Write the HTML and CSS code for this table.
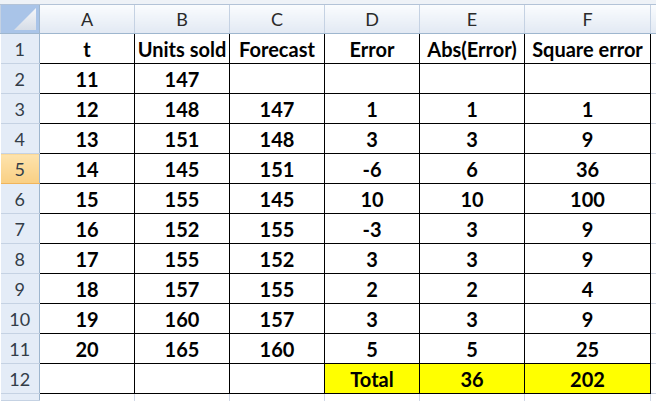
FILE: index.html
```html
<!DOCTYPE html>
<html>
<head>
<meta charset="utf-8">
<link rel="stylesheet" href="styles.css">
</head>
<body>
<div class="topbar"></div>
<table class="sheet">
  <colgroup>
    <col class="c-rh"><col class="c-a"><col class="c-b"><col class="c-c"><col class="c-d"><col class="c-e"><col class="c-f"><col class="c-g">
  </colgroup>
  <thead>
    <tr class="colhead">
      <th class="corner"><span class="tri"></span></th>
      <th>A</th><th>B</th><th>C</th><th>D</th><th>E</th><th>F</th><th class="edge"></th>
    </tr>
  </thead>
  <tbody>
    <tr><th class="rh">1</th><td class="d">t</td><td class="d">Units sold</td><td class="d">Forecast</td><td class="d">Error</td><td class="d">Abs(Error)</td><td class="d">Square error</td><td class="o"></td></tr>
    <tr><th class="rh">2</th><td class="d">11</td><td class="d">147</td><td class="d"></td><td class="d"></td><td class="d"></td><td class="d"></td><td class="o"></td></tr>
    <tr><th class="rh">3</th><td class="d">12</td><td class="d">148</td><td class="d">147</td><td class="d">1</td><td class="d">1</td><td class="d">1</td><td class="o"></td></tr>
    <tr><th class="rh">4</th><td class="d">13</td><td class="d">151</td><td class="d">148</td><td class="d">3</td><td class="d">3</td><td class="d">9</td><td class="o"></td></tr>
    <tr><th class="rh sel">5</th><td class="d">14</td><td class="d">145</td><td class="d">151</td><td class="d">-6</td><td class="d">6</td><td class="d">36</td><td class="o"></td></tr>
    <tr><th class="rh">6</th><td class="d">15</td><td class="d">155</td><td class="d">145</td><td class="d">10</td><td class="d">10</td><td class="d">100</td><td class="o"></td></tr>
    <tr><th class="rh">7</th><td class="d">16</td><td class="d">152</td><td class="d">155</td><td class="d">-3</td><td class="d">3</td><td class="d">9</td><td class="o"></td></tr>
    <tr><th class="rh">8</th><td class="d">17</td><td class="d">155</td><td class="d">152</td><td class="d">3</td><td class="d">3</td><td class="d">9</td><td class="o"></td></tr>
    <tr><th class="rh">9</th><td class="d">18</td><td class="d">157</td><td class="d">155</td><td class="d">2</td><td class="d">2</td><td class="d">4</td><td class="o"></td></tr>
    <tr><th class="rh">10</th><td class="d">19</td><td class="d">160</td><td class="d">157</td><td class="d">3</td><td class="d">3</td><td class="d">9</td><td class="o"></td></tr>
    <tr><th class="rh">11</th><td class="d">20</td><td class="d">165</td><td class="d">160</td><td class="d">5</td><td class="d">5</td><td class="d">25</td><td class="o"></td></tr>
    <tr><th class="rh">12</th><td class="d"></td><td class="d"></td><td class="d"></td><td class="d hl">Total</td><td class="d hl">36</td><td class="d hl">202</td><td class="o"></td></tr>
    <tr class="partial"><th class="rh"></th><td class="o"></td><td class="o"></td><td class="o"></td><td class="o"></td><td class="o"></td><td class="o"></td><td class="o"></td></tr>
  </tbody>
</table>
</body>
</html>
```
FILE: styles.css
```css
html, body {
  margin: 0;
  padding: 0;
  background: #ffffff;
  overflow: hidden;
  width: 656px;
  height: 401px;
}

.topbar {
  height: 4px;
  background: #eef2f7;
  border-bottom: 1px solid #b3c3d7;
}

.sheet {
  border-collapse: collapse;
  table-layout: fixed;
  width: 656px;
  font-family: "Lato", "Liberation Sans", sans-serif;
}

.c-rh { width: 39px; }
.c-a { width: 95px; }
.c-b { width: 95px; }
.c-c { width: 95px; }
.c-d { width: 95px; }
.c-e { width: 105px; }
.c-f { width: 126px; }
.c-g { width: 6px; }

.colhead th {
  height: 28px;
  padding: 0;
  font-weight: normal;
  font-size: 18px;
  color: #2a2a2a;
  background: linear-gradient(#fafcfe, #e2e9f3);
  border-left: 1px solid #c5d2e3;
  border-right: 1px solid #c5d2e3;
  border-bottom: 1px solid #9eb6ce;
  border-top: none;
}

.colhead th.corner {
  position: relative;
  background: #a9c4e8;
  border-right: 1px solid #9eb6ce;
}

.tri {
  position: absolute;
  right: 3px;
  bottom: 3px;
  width: 22px;
  height: 22px;
  background: linear-gradient(#f4f6f9, #d6dde7);
  clip-path: polygon(100% 0, 100% 100%, 0 100%);
}

tbody tr {
  height: 30px;
}

tbody tr.partial {
  height: 7px;
}

.rh {
  padding: 0;
  font-weight: normal;
  font-size: 18px;
  line-height: 1;
  color: #333d48;
  background: #e4ecf7;
  border-right: 1px solid #9eb6ce;
  border-bottom: 1px solid #c5d2e3;
  text-align: center;
}

.rh.sel {
  background: linear-gradient(#fde3ad, #f9cf83);
  border-bottom: 1px solid #f0b45b;
  border-top: 1px solid #f0b45b;
}

.d {
  padding: 0;
  border: 1px solid #000000;
  text-align: center;
  font-weight: bold;
  font-size: 20px;
  line-height: 1;
  color: #000000;
  white-space: nowrap;
  overflow: hidden;
}

.d.hl {
  background: #ffff00;
}

.o {
  padding: 0;
  border: 1px solid #d0d7e5;
}

.partial .o {
  border-bottom: none;
}
```
